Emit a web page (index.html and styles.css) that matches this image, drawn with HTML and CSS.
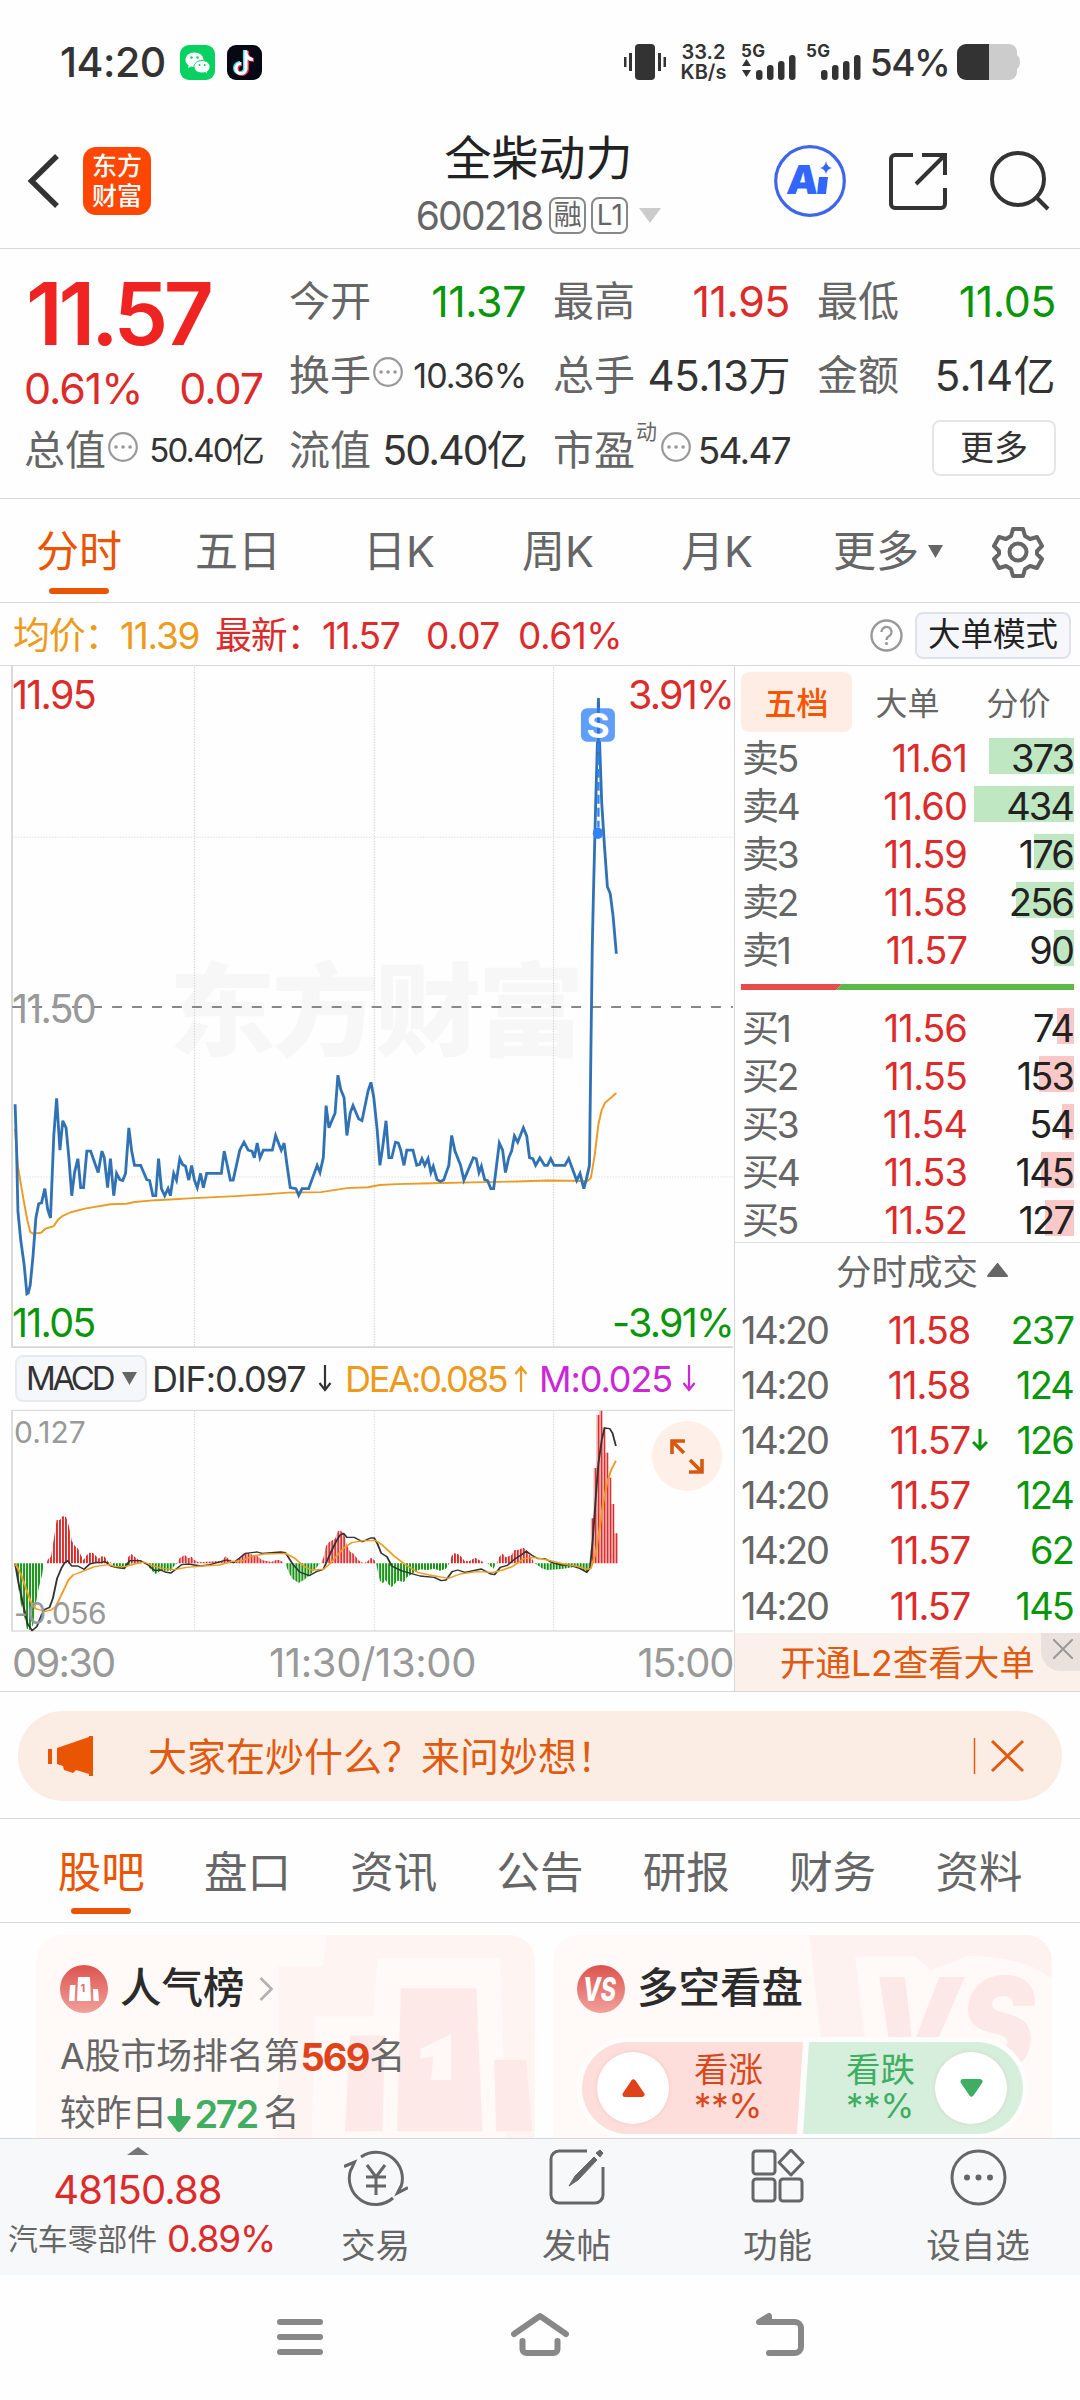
FILE: index.html
```html
<!DOCTYPE html>
<html lang="zh-CN">
<head>
<meta charset="utf-8">
<title>全柴动力 600218</title>
<link rel="stylesheet" href="styles.css">
</head>
<body>
<header class="status">
  <span class="clock">14:20</span>
  <svg class="app" viewBox="0 0 35 35"><rect width="35" height="35" rx="9" fill="#07d160"/><path d="M14.500 7.500c-5.300 0-9 3.200-9 7.200 0 2.300 1.200 4.200 3.200 5.500l-.8 2.700 3.200-1.500c1 .3 2.200.5 3.400.5 5 0 9-3.200 9-7.200s-4-7.200-9-7.200z" fill="#fff"/><path d="M22 15.500c4.500 0 8 2.700 8 6.300 0 2-1 3.600-2.700 4.800l.6 2.300-2.700-1.300c-1 .3-2 .4-3.200.4-4.500 0-8-2.700-8-6.200s3.500-6.300 8-6.300z" fill="#fff" stroke="#07d160"/><g fill="#07d160"><circle cx="11.500" cy="12.500" r="1.200"/><circle cx="17.500" cy="12.500" r="1.200"/><circle cx="19.500" cy="20" r="1"/><circle cx="24.700" cy="20" r="1"/></g></svg>
  <svg class="app" viewBox="0 0 35 35"><rect width="35" height="35" rx="9" fill="#060814"/><g fill="none" stroke-width="4"><path d="M18 5v18a5 5 0 1 1-5-5M18 8c1 4 3 6 7 6" stroke="#25f4ee"/><path d="M20 6v18a5 5 0 1 1-5-5M20 9c1 4 3 6 7 6" stroke="#fe2c55"/><path d="M19 5.500v18a5 5 0 1 1-5-5M19 8.500c1 4 3 6 7 6" stroke="#fff" stroke-width="3.200"/></g></svg>
  <span class="spacer"></span>
  <svg width="42" height="36" viewBox="0 0 42 36" fill="#333"><rect x="11" width="20" height="36" rx="4"/><rect y="13" width="2.500" height="10"/><rect x="5" y="9" width="3" height="18"/><rect x="34" y="9" width="3" height="18"/><rect x="39.500" y="13" width="2.500" height="10"/></svg>
  <span class="speed">33.2<br>KB/s</span>
  <span class="signal"><b>5G</b><svg viewBox="0 0 56 36" fill="#333"><path d="M1 22l4.500-7 4.500 7zM1 26l4.500 7 4.500-7z"/><rect x="15" y="26" width="6.500" height="10" rx="3"/><rect x="26" y="21" width="6.500" height="15" rx="3"/><rect x="37" y="17" width="6.500" height="19" rx="3"/><rect x="48" y="11" width="6.500" height="25" rx="3"/></svg></span>
  <span class="signal second"><b>5G</b><svg viewBox="0 0 56 36" fill="#333"><rect x="15" y="26" width="6.500" height="10" rx="3"/><rect x="26" y="21" width="6.500" height="15" rx="3"/><rect x="37" y="17" width="6.500" height="19" rx="3"/><rect x="48" y="11" width="6.500" height="25" rx="3"/></svg></span>
  <span class="percent">54%</span>
  <svg width="63" height="36" viewBox="0 0 63 36"><path d="M32 0h20a8 8 0 0 1 8 8v3q3 2 3 7t-3 7v3a8 8 0 0 1-8 8H32z" fill="#ccc"/><path d="M32 0H9a9 9 0 0 0-9 9v18a9 9 0 0 0 9 9h23z" fill="#333"/></svg>
</header>

<nav class="titlebar">
  <div class="left">
    <svg width="32" height="54" viewBox="0 0 32 54" fill="none" stroke="#333" stroke-width="5.500"><path d="M30 2L4.500 27 30 52"/></svg>
    <span class="logo">东方<br>财富</span>
  </div>
  <div class="title"><h1>全柴动力</h1><p>600218<i>融</i><i class="l1">L1</i><svg width="22" height="15" viewBox="0 0 22 15"><path d="M0 0h22L11 15z" fill="#ccc"/></svg></p></div>
  <div class="right">
    <svg width="72" height="72" viewBox="0 0 72 72"><circle cx="36" cy="36" r="34.300" fill="#fff" stroke="#3f66ea" stroke-width="3.200"/><text x="13" y="49" font-family="Inter" font-weight="900" font-size="40" fill="#3366ff" transform="skewX(-5) translate(3 0)">A</text><path d="M45 32h9l-2 17h-9z" fill="#3366ff"/><path d="M52 16q1 6 6 7-5 1-6 6-1-5-6-6 5-1 6-7z" fill="#3366ff"/></svg>
    <svg width="58" height="58" viewBox="0 0 58 58" fill="none" stroke="#333" stroke-width="4"><path d="M24 3H6a4 4 0 0 0-4 4v45a4 4 0 0 0 4 4h46a4 4 0 0 0 4-4V36M33 3h23v20M56 3L27 32"/></svg>
    <svg width="60" height="60" viewBox="0 0 60 60" fill="none" stroke="#333" stroke-width="4"><circle cx="28" cy="28" r="26"/><path d="M47 47l11 11"/></svg>
  </div>
</nav>

<section class="quote">
  <div class="now">
    <strong>11.57</strong>
    <p class="chg"><span>0.61%</span><span>0.07</span></p>
    <p class="cap"><label>总值</label><svg class="dots" viewBox="0 0 30 30"><circle cx="15" cy="15" r="13.800"/><path d="M8 15h.1M15 15h.1M22 15h.1"/></svg><span class="s33">50.40亿</span></p>
  </div>
  <div class="grid">
    <p><label>今开</label><span class="down">11.37</span></p>
    <p><label>最高</label><span class="up">11.95</span></p>
    <p><label>最低</label><span class="down">11.05</span></p>
    <p><label>换手</label><svg class="dots" viewBox="0 0 30 30"><circle cx="15" cy="15" r="13.800"/><path d="M8 15h.1M15 15h.1M22 15h.1"/></svg><span class="s34">10.36%</span></p>
    <p><label>总手</label><span class="s42">45.13万</span></p>
    <p><label>金额</label><span class="s42 amt">5.14亿</span></p>
    <p><label>流值</label><span class="s41">50.40亿</span></p>
    <p><label>市盈<sup>动</sup></label><svg class="dots pe" viewBox="0 0 30 30"><circle cx="15" cy="15" r="13.800"/><path d="M8 15h.1M15 15h.1M22 15h.1"/></svg><span class="s37">54.47</span></p>
    <p><button>更多</button></p>
  </div>
</section>

<nav class="periods">
  <span class="on">分时</span><span>五日</span><span>日K</span><span>周K</span><span>月K</span><span class="more">更多<svg width="15" height="13" viewBox="0 0 15 13"><path d="M0 0h15L7.500 13z" fill="#666"/></svg></span>
  <svg class="gear" width="52" height="52" viewBox="0 0 52 52" fill="none" stroke="#666" stroke-width="4" stroke-linejoin="round"><path d="M21 3h10l2 7 5 3 7-2 5 9-5 5v3l5 5-5 9-7-2-5 3-2 7H21l-2-7-5-3-7 2-5-9 5-5v-3l-5-5 5-9 7 2 5-3z"/><circle cx="26" cy="26" r="8.500"/></svg>
</nav>

<section class="info">
  <span class="avg">均价：11.39</span><span class="up last">最新：11.57</span><span class="up v">0.07</span><span class="up r">0.61%</span>
  <span class="spacer"></span>
  <svg width="33" height="33" viewBox="0 0 33 33"><circle cx="16.500" cy="16.500" r="15" fill="none" stroke="#999" stroke-width="2.400"/><path d="M11.500 13a5 5 0 1 1 7 4.500q-2 1-2 3.500" fill="none" stroke="#999" stroke-width="2.400"/><circle cx="16.500" cy="24.500" r="1.600" fill="#999"/></svg>
  <button>大单模式</button>
</section>

<main class="board">
  <section class="charts">
    <div class="price">
      <svg viewBox="0 13.400 1557.400 1527.700" preserveAspectRatio="none">
        <text x="358" y="869" textLength="880" font-family="Noto Sans CJK SC" font-weight="900" font-size="226" fill="#f7f7f7">东方财富</text>
        <g fill="none" stroke="#ccc" stroke-width="2" stroke-dasharray="3 3"><path d="M412 15V1538M793 15V1538M1173 15V1538"/><path d="M26 397H1553M26 1158H1553" stroke="#ddd"/></g>
        <path d="M25.500 13V1539H1553" fill="none" stroke="#d8d8d8" stroke-width="4"/>
        <path d="M26 777H1553" stroke="#888" stroke-width="4.500" stroke-dasharray="21 21.300"/>
        <polyline fill="none" stroke="#eb9c27" stroke-width="4.200" stroke-linejoin="round" points="32,1050 38,1135 50,1210 58,1255 64,1281 70,1285 87,1283 96,1274 114,1268 122,1255 133,1245 150,1237 180,1229 234,1219 268,1218 285,1214 330,1210 370,1208 400,1206 500,1201 560,1197 610,1193 680,1192 735,1183 780,1181 805,1176 840,1174 915,1172 1000,1170 1095,1168 1160,1166 1245,1167 1252,1160 1260,1110 1268,1040 1275,1008 1282,992 1295,980 1306,970"/>
        <polyline fill="none" stroke="#3172b5" stroke-width="6" points="32,995 35,1090 38,1235 44,1300 51,1353 57,1420 60,1418 64,1400 70,1335 76,1250 82,1218 88,1216 95,1184 101,1230 107,1250 114,1065 120,982 127,1098 133,1032 140,1048 146,1115 152,1200 158,1148 165,1117 171,1182 177,1182 184,1100 192,1100 208,1148 216,1100 221,1115 228,1182 234,1117 241,1200 247,1150 254,1164 260,1166 266,1150 273,1048 279,1100 285,1132 298,1132 311,1164 317,1166 324,1200 330,1200 336,1117 342,1184 349,1200 356,1184 361,1200 368,1150 374,1165 381,1117 387,1130 393,1134 400,1165 406,1132 412,1165 418,1182 425,1150 431,1182 438,1150 469,1150 475,1100 482,1134 488,1165 494,1165 501,1132 508,1098 517,1080 526,1098 534,1100 539,1115 545,1082 551,1115 558,1098 577,1098 584,1065 590,1082 596,1098 602,1082 608,1130 615,1182 627,1184 633,1199 640,1184 654,1184 672,1132 678,1148 685,1115 691,998 697,1048 704,1030 710,1015 716,930 722,962 729,980 735,1065 742,1015 748,998 760,1028 767,1032 780,965 786,946 792,980 799,1050 805,1132 811,1090 818,1032 824,1115 830,1115 838,1080 844,1082 849,1098 856,1132 862,1098 875,1098 883,1132 889,1130 894,1117 900,1132 907,1117 913,1148 918,1134 926,1164 933,1168 940,1165 951,1132 957,1065 964,1100 976,1132 983,1165 1003,1115 1009,1117 1015,1148 1020,1134 1027,1164 1033,1166 1040,1184 1046,1184 1058,1082 1065,1098 1071,1148 1078,1115 1084,1100 1090,1066 1097,1080 1109,1048 1116,1066 1122,1115 1129,1117 1135,1132 1144,1115 1154,1132 1160,1132 1167,1117 1174,1132 1197,1132 1205,1117 1222,1166 1229,1150 1237,1184 1242,1165 1249,1132 1252,880 1255,640 1258,500 1262,330 1266,180 1268,85 1271,200 1275,320 1281,420 1287,508 1293,523 1299,573 1306,658"/>
        <path d="M1268 186V375" stroke="#2f83f7" stroke-width="5" stroke-dasharray="20 9"/><ellipse cx="1267" cy="388" rx="11" ry="13" fill="#2f83f7"/>
        <rect x="1231" y="108" width="72" height="75" rx="13" fill="#5f9ffb"/><path d="M1268 108V183" stroke="#2f75de" stroke-width="6"/>
        <text x="1267" y="174" text-anchor="middle" font-family="Inter" font-weight="700" font-size="75" fill="#fff">S</text>
      </svg>
      <div class="axis up"><span>11.95</span><span>3.91%</span></div>
      <div class="axis mid"><span>11.50</span></div>
      <div class="axis down"><span>11.05</span><span>-3.91%</span></div>
    </div>
    <div class="indicator">
      <button>MACD<svg width="15" height="13" viewBox="0 0 15 13"><path d="M0 0h15L7.500 13z" fill="#666"/></svg></button>
      <span class="dif">DIF:0.097</span><svg class="arr" viewBox="0 0 14 27" fill="none" stroke="#333" stroke-width="2.200"><path d="M7 0v25M1.500 18L7 25l5.500-7"/></svg>
      <span class="dea">DEA:0.085</span><svg class="arr" viewBox="0 0 14 27" fill="none" stroke="#ee9a1c" stroke-width="2.200"><path d="M7 27V2M1.500 9L7 2l5.500 7"/></svg>
      <span class="m">M:0.025</span><svg class="arr" viewBox="0 0 14 27" fill="none" stroke="#cd26d6" stroke-width="2.200"><path d="M7 0v25M1.500 18L7 25l5.500-7"/></svg>
    </div>
    <div class="macd">
      <svg viewBox="0 207 1557.400 672" preserveAspectRatio="none">
        <defs>
          <pattern id="red" x="30" width="6.340" height="20" patternUnits="userSpaceOnUse"><rect width="4" height="20" fill="#d92626"/></pattern>
          <pattern id="green" x="30" width="6.340" height="20" patternUnits="userSpaceOnUse"><rect width="4" height="20" fill="#088c08"/></pattern>
        </defs>
        <path d="M412 212V872M793 212V872M1173 212V872" fill="none" stroke="#ccc" stroke-width="2" stroke-dasharray="4 4"/>
        <path d="M1553 211H25.500V873H1553" fill="none" stroke="#ddd" stroke-width="4"/>
        <path fill="url(#red)" d="M98 670 102 657 108 650 114 597 120 540 127 540 133 528 140 531 146 558 152 602 159 619 165 625 171 645 177 660 184 645 190 638 197 639 203 647 209 656 216 649 222 650 229 665 236 668V670zM268 670 272 650 279 642 285 650 292 658 300 665V670zM376 670 380 655 392 645 399 655 406 650 412 660 420 667 440 665 470 662 478 648 485 658 500 665 508 655 516 640 525 638 535 645 545 648 555 660 575 666 585 660 592 660 600 667V670zM680 670 685 655 691 617 697 607 704 601 710 596 716 573 723 573 729 582 735 616 742 635 748 640 754 650 761 662 770 670 778 665 786 653 793 660 797 670zM953 670 957 647 963 640 970 642 976 648 985 664 995 663 1007 653 1015 660 1025 667V670zM1053 670 1058 650 1065 641 1072 652 1084 645 1090 630 1097 630 1109 623 1116 630 1122 645 1130 662V670z"/>
        <path fill="url(#red)" d="M1252 670V535h6V384h6V225h6.500V212h6.300V262h6.300V338h6.300V413h6.300V492h6.300V580h7V670z"/>
        <path fill="url(#green)" d="M35 670 38 735 44 790 51 828 57 866 63 870 70 855 76 790 82 744 89 706 93 670zM236 670 242 684 260 686 270 680 280 670zM310 670 320 690 330 702 340 692 362 692 370 676 376 670zM605 670 608 684 614 703 620 717 633 729 646 718 660 700 672 680 678 670zM797 670 799 684 805 722 811 730 817 720 824 734 830 741 836 732 842 722 849 724 856 726 862 712 875 700 890 688 905 690 920 686 932 692 945 686 952 670zM1033 670 1045 686 1052 670zM1133 670 1150 686 1160 690 1190 687 1220 680 1235 692 1245 698 1250 670z"/>
        <polyline fill="none" stroke="#333" stroke-width="4" stroke-linejoin="round" points="32,670 38,720 50,800 58,850 68,872 78,860 88,825 95,808 105,802 112,775 121,715 130,685 137,668 143,662 152,678 165,678 178,688 190,672 205,667 215,668 222,664 235,678 250,683 263,686 275,662 298,662 315,676 328,692 340,690 350,696 362,699 375,685 385,674 400,672 425,678 445,674 480,660 495,668 520,640 545,636 555,640 595,636 605,638 620,672 635,696 655,707 670,695 685,688 700,640 712,605 720,586 728,580 735,592 750,592 768,605 785,594 793,594 800,612 808,640 820,650 830,678 850,692 870,700 890,708 920,712 935,722 945,720 958,695 970,690 985,697 1020,687 1040,702 1048,704 1060,682 1075,676 1090,658 1105,644 1115,634 1127,646 1140,656 1155,656 1170,668 1190,675 1210,677 1230,686 1243,697 1250,685 1256,600 1262,480 1268,370 1275,300 1281,264 1292,266 1298,280 1305,318"/>
        <polyline fill="none" stroke="#f09d1f" stroke-width="4.200" stroke-linejoin="round" points="32,670 45,705 55,745 65,785 75,806 95,814 108,810 118,800 130,765 145,720 155,705 175,694 200,680 230,674 245,680 265,680 285,672 305,666 325,678 345,685 370,689 395,682 430,678 465,675 490,665 515,661 535,648 560,642 605,640 625,655 645,680 660,690 685,688 700,670 715,645 730,622 745,608 770,602 795,601 810,615 835,648 860,675 885,697 910,705 950,715 975,702 1010,695 1045,697 1065,690 1085,680 1110,656 1130,652 1150,657 1175,665 1200,674 1225,680 1245,688 1252,685 1262,640 1270,570 1278,490 1287,425 1295,390 1305,362"/>
      </svg>
      <span class="hi">0.127</span><span class="lo">-0.056</span>
      <svg class="expand" viewBox="0 0 70 70"><circle cx="35" cy="35" r="35" fill="#fef0e8"/><path d="M20 33V20h13M20 20l12 12M50 38v13H37M50 51L38 39" fill="none" stroke="#d6590f" stroke-width="3.600"/></svg>
    </div>
    <div class="times"><span>09:30</span><span>11:30/13:00</span><span>15:00</span></div>
  </section>

  <aside class="depth">
    <div class="dtabs"><span class="on">五档</span><span>大单</span><span>分价</span></div>
    <div class="levels sell">
      <p><label>卖5</label><b>11.61</b><em><i style="width:85px"></i>373</em></p>
      <p><label>卖4</label><b>11.60</b><em><i style="width:100px"></i>434</em></p>
      <p><label>卖3</label><b>11.59</b><em><i style="width:40px"></i>176</em></p>
      <p><label>卖2</label><b>11.58</b><em><i style="width:58px"></i>256</em></p>
      <p><label>卖1</label><b>11.57</b><em><i style="width:20px"></i>90</em></p>
    </div>
    <svg class="ratio" viewBox="0 0 333 6"><path d="M0 0H101L95 6H0z" fill="#e94b4b"/><path d="M101 0H333V6H95z" fill="#5cb947"/></svg>
    <div class="levels buy">
      <p><label>买1</label><b>11.56</b><em><i style="width:17px"></i>74</em></p>
      <p><label>买2</label><b>11.55</b><em><i style="width:35px"></i>153</em></p>
      <p><label>买3</label><b>11.54</b><em><i style="width:12px"></i>54</em></p>
      <p><label>买4</label><b>11.53</b><em><i style="width:33px"></i>145</em></p>
      <p><label>买5</label><b>11.52</b><em><i style="width:29px"></i>127</em></p>
    </div>
    <h2>分时成交<svg width="21" height="14" viewBox="0 0 21 14"><path d="M10.500 1L20 13H1z" fill="#666" stroke="#666" stroke-width="2" stroke-linejoin="round"/></svg></h2>
    <div class="trades">
      <p><label>14:20</label><b>11.58</b><em>237</em></p>
      <p><label>14:20</label><b>11.58</b><em>124</em></p>
      <p><label>14:20</label><b>11.57</b><svg width="16" height="22" viewBox="0 0 16 22" fill="none" stroke="#0a960a" stroke-width="3"><path d="M8 0v20M1 13l7 7 7-7"/></svg><em>126</em></p>
      <p><label>14:20</label><b>11.57</b><em>124</em></p>
      <p><label>14:20</label><b>11.57</b><em>62</em></p>
      <p><label>14:20</label><b>11.57</b><em>145</em></p>
    </div>
    <div class="l2">开通L2查看大单<span><svg width="20" height="20" viewBox="0 0 20 20" stroke="#999" stroke-width="2"><path d="M0 0l20 20M20 0L0 20"/></svg></span></div>
  </aside>
</main>

<section class="promo"><div>
  <svg width="45" height="40" viewBox="0 0 45 40" fill="#ea5504"><path d="M0 13h4v15H0zM9 12L41 1V0h4v40h-4v-2l-13-4-3 3-9-3-1-4-6-2z"/></svg>
  <span>大家在炒什么？来问妙想！</span>
  <svg class="close" width="52" height="36" viewBox="0 0 52 36" fill="none" stroke="#e05a10"><path d="M1.500 0v36" stroke-width="1.500"/><path d="M19 3l31 30M50 3L19 33" stroke-width="3"/></svg>
</div></section>

<nav class="tabs"><span class="on">股吧</span><span>盘口</span><span>资讯</span><span>公告</span><span>研报</span><span>财务</span><span>资料</span></nav>

<section class="cards">
  <article>
    <svg class="bg" viewBox="18 30 1497 610">
      <path d="M890 30H1515V640H1430L1412 100H1043L1030 275H855L845 640H745V124H880z" fill="#fdf0ee" opacity=".55"/>
      <path d="M1113 190H1340L1358 620H1102zM960 332H1065L1058 620H945zM1393 405H1490L1508 620H1400z" fill="#fce6e4" opacity=".8"/>
      <path d="M1264 328L1172 372V402L1210 394 1204 466H1264z" fill="#fff8f6"/>
    </svg>
    <h3><svg width="48" height="48" viewBox="0 0 48 48"><defs><linearGradient id="g" x2="0" y2="1"><stop stop-color="#dc534e"/><stop offset="1" stop-color="#f2a09b"/></linearGradient></defs><circle cx="24" cy="24" r="24" fill="url(#g)"/><path d="M18 12h12l1 24H17zM10 20h5.500l-1 16H9zM33 24h5l1 12h-5.500z" fill="#fff"/><text x="20.500" y="27" font-family="Inter" font-weight="700" font-size="11" fill="#e0736e">1</text></svg><span>人气榜</span><svg width="14" height="24" viewBox="0 0 14 24" fill="none" stroke="#b5b1b0" stroke-width="2.800"><path d="M1.500 1l11 11-11 11"/></svg></h3>
    <p>A股市场排名第<b>569</b>名</p>
    <p class="second">较昨日<svg width="24" height="34" viewBox="0 0 24 34" fill="#3fae62"><path d="M9 3q0-3 3-3t3 3v15h7q3 1 1 3L14 33q-2 2-4 0L1 21q-2-2 1-3h7z"/></svg><b class="g">272</b><span>名</span></p>
  </article>
  <article>
    <svg class="bg" viewBox="24 30 1497 610">
      <path d="M793 30H1521V160Q1440 95 1270 92L1160 135 1110 94H930L960 340H828z" fill="#fdeeec" opacity=".65"/>
      <text x="970" y="440" font-family="Inter" font-weight="900" font-style="italic" font-size="390" fill="#fce8e6" textLength="500" lengthAdjust="spacingAndGlyphs">VS</text>
    </svg>
    <h3><svg width="48" height="48" viewBox="0 0 48 48"><circle cx="24" cy="24" r="24" fill="url(#g)"/><text x="6" y="36" font-family="Inter" font-weight="800" font-style="italic" font-size="32" textLength="33" lengthAdjust="spacingAndGlyphs" fill="#fff">VS</text></svg><span>多空看盘</span></h3>
    <div class="vote">
      <div class="bull"><i><svg width="23" height="18" viewBox="0 0 23 18"><path d="M11.500 3L20 15.500H3z" fill="#e0421a" stroke="#e0421a" stroke-width="5" stroke-linejoin="round"/></svg></i><span>看涨<br>**%</span></div>
      <div class="bear"><span>看跌<br>**%</span><i><svg width="23" height="18" viewBox="0 0 23 18"><path d="M11.500 15L20 2.500H3z" fill="#3fae62" stroke="#3fae62" stroke-width="5" stroke-linejoin="round"/></svg></i></div>
    </div>
  </article>
</section>

<footer class="actions">
  <div class="index"><svg width="22" height="8" viewBox="0 0 22 8"><path d="M11 0l11 8H0z" fill="#777"/></svg><b>48150.88</b><p>汽车零部件<em>0.89%</em></p></div>
  <div><svg width="64" height="58" viewBox="0 0 64 58" fill="none" stroke="#666" stroke-width="3"><path d="M17 8A26.300 26.300 0 0 1 57 38M49 49A26.300 26.300 0 0 1 7 20M0 17.500L10.500 13 7 21M64 38.500L53.500 44 57 37"/><path d="M23 16l9 12 9-12M22 28h20M22 37h20M32 28v18"/></svg><span>交易</span></div>
  <div><svg width="56" height="56" viewBox="0 0 56 56" fill="none" stroke="#666" stroke-width="3"><path d="M38 2H10a8 8 0 0 0-8 8v36a8 8 0 0 0 8 8h36a8 8 0 0 0 8-8V18"/><path d="M20 37l6-10 19-19 3 3-19 20zM47 4l4-3 3 3-3 4z" fill="#666" stroke-width="1"/></svg><span>发帖</span></div>
  <div><svg width="54" height="54" viewBox="0 0 54 54" fill="none" stroke="#666" stroke-width="3"><rect x="2" y="2" width="22" height="23" rx="3"/><rect x="2" y="30" width="22" height="22" rx="3"/><rect x="29" y="30" width="22" height="22" rx="3"/><path d="M40 1l12 12.500L40 26 28 13.500z" stroke-linejoin="round"/></svg><span>功能</span></div>
  <div><svg width="57" height="57" viewBox="0 0 57 57"><circle cx="28.500" cy="28.500" r="26.500" fill="none" stroke="#666" stroke-width="3"/><g fill="#666"><circle cx="17" cy="28.500" r="3"/><circle cx="28.500" cy="28.500" r="3"/><circle cx="40" cy="28.500" r="3"/></g></svg><span>设自选</span></div>
</footer>

<nav class="system">
  <svg width="46" height="44" viewBox="0 0 46 44" fill="none" stroke="#888" stroke-width="6" stroke-linecap="round"><path d="M3 10h40M3 25h40M3 40h40"/></svg>
  <svg width="58" height="44" viewBox="0 0 58 44" fill="none" stroke="#888" stroke-width="6" stroke-linecap="round"><path d="M3 22L29 4l26 18" stroke-linejoin="round"/><path d="M11.500 29v8a4 4 0 0 0 4 4h27a4 4 0 0 0 4-4v-8"/></svg>
  <svg width="48" height="44" viewBox="0 0 48 44" fill="none" stroke="#888" stroke-width="6" stroke-linecap="round"><path d="M13 41h26a6 6 0 0 0 6-6V16a6 6 0 0 0-6-6H3L13 4v6" stroke-linejoin="round"/></svg>
</nav>
</body>
</html>
```

FILE: styles.css
```css
* { box-sizing: border-box; margin: 0; padding: 0; }
body { width: 1080px; height: 2400px; overflow: hidden; background: #fefefe; color: #333; font-family: Inter, "Noto Sans CJK SC", sans-serif; font-weight: 400; letter-spacing: -.03em; line-height: 1; }
svg { display: block; flex: none; }
i, em { font-style: normal; }
b { font-weight: 400; }
button { font: inherit; color: inherit; letter-spacing: 0; border-radius: 8px; }
.spacer { flex: 1; }
.up { color: #dc2b2b; }
.down { color: #0a960a; }

.status { height: 124px; display: flex; align-items: center; padding: 0 60px 0 60px; }
.clock { width: 120px; font-size: 41px; font-weight: 500; }
.app { width: 35px; height: 35px; margin-right: 12px; }
.speed { width: 75px; text-align: center; font-size: 20px; line-height: 20px; font-weight: 600; letter-spacing: 0; }
.signal { position: relative; width: 56px; height: 36px; }
.signal svg { width: 56px; height: 36px; }
.signal b { position: absolute; left: 0; top: -1px; font-size: 17px; font-weight: 700; letter-spacing: .02em; }
.signal.second { margin-left: 9px; }
.percent { width: 95px; text-align: center; font-size: 37px; font-weight: 500; letter-spacing: -.04em; }

.titlebar { height: 125px; border-bottom: 1px solid #d8d8d8; display: grid; grid-template-columns: 1fr auto 1fr; align-items: center; padding: 0 30px 12px 27px; }
.titlebar .left, .titlebar .right { display: flex; align-items: center; }
.titlebar .right { justify-content: flex-end; gap: 43px; }
.logo { width: 68px; height: 68px; margin-left: 24px; border-radius: 13px; background: #ff4602; color: #fff; font-size: 25px; font-weight: 500; line-height: 30px; padding-top: 4px; text-align: center; letter-spacing: 0; }
.title { text-align: center; padding-top: 8px; }
.title h1 { font-size: 47px; line-height: 52px; font-weight: 400; letter-spacing: 0; color: #222; }
.title p { display: flex; align-items: center; height: 46px; margin-top: 8px; font-size: 39px; letter-spacing: -.045em; color: #666; }
.title i { width: 37px; height: 37px; margin-left: 5px; border: 2px solid #888; border-radius: 8px; font-size: 28px; line-height: 32px; letter-spacing: 0; text-align: center; }
.title p i:first-of-type { margin-left: 7px; }
.title p svg { margin-left: 11px; }

.quote { height: 250px; border-bottom: 1px solid #d8d8d8; display: flex; padding: 0 24px 0 24px; }
.quote label { font-size: 41px; color: #666; letter-spacing: 0; position: relative; }
.now { width: 239px; padding-top: 33px; margin-right: 26px; }
.now strong { display: block; margin-left: 2px; font-size: 87px; line-height: 64px; font-weight: 600; letter-spacing: -.05em; color: #f02323; }
.chg { display: flex; justify-content: space-between; margin-top: 20px; font-size: 43px; line-height: 44px; letter-spacing: -.025em; color: #dc2b2b; }
.cap { display: flex; align-items: center; justify-content: space-between; height: 40px; margin-top: 20px; }
.dots { width: 30px; height: 30px; margin: -7px auto 0 2px; fill: none; stroke: #999; stroke-width: 2.200; stroke-linecap: round; }
.dots path { stroke-width: 3.500; }
.dots.pe { margin-left: 26px; }
.grid { display: grid; grid-template-columns: 237px 237px 239px; column-gap: 27px; grid-auto-rows: 74.500px; padding-top: 15px; }
.grid p { display: flex; align-items: center; justify-content: space-between; font-size: 43px; }
.grid sup { position: absolute; left: 83px; top: -9px; font-size: 21px; line-height: 21px; }
.grid .s42 { font-size: 42px; letter-spacing: -.01em; }
.grid .amt { letter-spacing: .01em; }
.grid .s41 { font-size: 41px; letter-spacing: -.045em; }
.grid .s37 { font-size: 37px; letter-spacing: -.045em; }
.grid .s34 { font-size: 34px; letter-spacing: -.03em; }
.s33 { font-size: 33px; letter-spacing: -.055em; }
.grid button { margin-left: auto; width: 124px; height: 56px; border: 2px solid #e6e6e6; background: #fff; font-size: 34px; position: relative; top: -2px; }

.periods { position: relative; height: 104px; border-bottom: 1px solid #d8d8d8; display: grid; grid-template-columns: 158px 160px 162px 156px 162px 176px 106px; align-items: center; font-size: 43px; letter-spacing: 0; color: #666; }
.periods span { position: relative; text-align: center; line-height: 105px; }
.periods .more { display: flex; align-items: center; padding-left: 35px; }
.periods .more svg { margin-left: 9px; }
.gear { margin-left: 18px; }
.on { color: #ea5504; }
.periods .on::after, .tabs .on::after { content: ""; position: absolute; left: 50%; bottom: 10px; width: 60px; height: 6px; margin-left: -30px; border-radius: 3px; background: #ea5504; }

.info { height: 63px; border-bottom: 1px solid #d8d8d8; display: flex; align-items: center; padding: 2px 9px 0 13px; font-size: 37px; }
.avg { width: 202px; color: #ee9a1c; white-space: nowrap; letter-spacing: -.035em; }
.last { width: 211px; white-space: nowrap; letter-spacing: -.035em; }
.v { width: 92px; }
.info button { margin-left: 12px; width: 156px; height: 47px; border: 2px solid #dfe2e8; background: #f6f7fa; font-size: 32.500px; color: #222; white-space: nowrap; }

.board { display: flex; height: 1026px; border-bottom: 1px solid #d8d8d8; }
.charts { width: 734px; }
.price { position: relative; height: 682px; display: flex; flex-direction: column; justify-content: space-between; padding: 9px 1px 4px 12px; }
.price > svg, .macd > svg:first-child { position: absolute; left: 0; top: 0; width: 735px; height: 100%; }
.axis { position: relative; display: flex; justify-content: space-between; font-size: 39.500px; line-height: 41px; letter-spacing: -.045em; font-feature-settings: "calt" 0; }
.mid { color: #999; }
.indicator { height: 61px; display: flex; align-items: center; padding: 0 0 0 15px; font-size: 36px; letter-spacing: -.03em; }
.indicator button { display: flex; align-items: center; justify-content: space-between; width: 132px; height: 47px; padding: 0 8px 0 9px; border: 2px solid #e8eaee; background: #f6f7fa; font-size: 33px; letter-spacing: -.1em; }
.indicator span { white-space: nowrap; }
.dif { width: 166px; margin-left: 5px; letter-spacing: -.03em; }
.dea { width: 169px; margin-left: 13px; color: #ee9a1c; letter-spacing: -.06em; }
.m { width: 143px; margin-left: 11px; color: #cd26d6; }
.arr { width: 14px; height: 27px; }
.macd { position: relative; height: 224px; display: flex; flex-direction: column; justify-content: space-between; padding: 8px 0 5px 14px; font-size: 30px; line-height: 30px; color: #999; font-feature-settings: "calt" 0; }
.hi, .lo { position: relative; letter-spacing: 0; }
.lo { letter-spacing: -.02em; }
.expand { position: absolute; left: 652px; top: 12px; width: 70px; height: 70px; }
.times { height: 58px; display: grid; grid-template-columns: 1fr auto 1fr; align-items: center; padding: 1px 1px 0 12px; font-size: 40px; color: #999; }
.times span:nth-child(1) { letter-spacing: -.045em; }
.times span:nth-child(2) { letter-spacing: -.01em; }
.times span:last-child { text-align: right; letter-spacing: -.035em; }

.depth { width: 346px; border-left: 1px solid #d8d8d8; }
.dtabs { display: flex; align-items: center; height: 60px; margin: 6px 0 0 6px; font-size: 32px; letter-spacing: 0; color: #666; }
.dtabs span { width: 111px; line-height: 64px; height: 60px; text-align: center; }
.dtabs .on { background: #fdede5; border-radius: 8px; color: #f95400; font-weight: 500; }
.levels p, .trades p { position: relative; display: flex; align-items: center; height: 48px; padding: 0 6px 0 7px; font-size: 38px; }
.levels label, .levels b { position: relative; top: 2px; }
.levels label { width: 91px; font-size: 37px; letter-spacing: -.06em; color: #666; }
.levels b { width: 134px; text-align: right; color: #dc2b2b; letter-spacing: -.025em; }
.levels em { position: relative; flex: 1; height: 36px; line-height: 41px; text-align: right; color: #222; letter-spacing: -.05em; z-index: 0; padding-right: 1px; }
.levels em i { position: absolute; right: 0; top: 0; height: 36px; background: #bfe7c1; z-index: -1; }
.buy em i { background: #fbc8c8; }
.ratio { width: 333px; height: 6px; margin: 12px 6px; }
.depth h2 { display: flex; align-items: center; height: 60px; padding-left: 101px; border-top: 1px solid #e0e0e0; font-size: 35.500px; font-weight: 400; letter-spacing: 0; color: #666; }
.depth h2 svg { margin-left: 9px; margin-top: -6px; }
.trades p { height: 55.200px; }
.trades label { width: 91px; margin-left: -1px; letter-spacing: -.06em; color: #666; }
.trades b { width: 138px; text-align: right; color: #dc2b2b; letter-spacing: -.03em; }
.trades svg { margin-left: 2px; }
.trades em { flex: 1; text-align: right; color: #0a960a; letter-spacing: -.05em; padding-right: 1px; }
.l2 { position: relative; height: 58px; padding-left: 45px; background: #fcf0ea; color: #e05a10; font-size: 35.500px; line-height: 62px; letter-spacing: 0; white-space: nowrap; }
.l2 span { position: absolute; right: 0; top: 0; width: 39px; height: 38px; padding: 6px 0 0 12px; border-radius: 0 0 0 20px; background: #ebe1dc; }

.promo { height: 127px; border-bottom: 1px solid #d8d8d8; padding: 19px 18px 0; }
.promo div { display: flex; align-items: center; height: 90px; padding: 0 37px 0 30px; border-radius: 45px; background: #fcede4; color: #e05a10; font-size: 39px; letter-spacing: 0; }
.promo span { margin-left: 55px; }
.promo .close { margin-left: auto; }

.tabs { height: 104px; border-bottom: 1px solid #d8d8d8; display: grid; grid-template-columns: repeat(7, 146.300px); padding-left: 28px; font-size: 43.500px; letter-spacing: 0; color: #666; }
.tabs span { position: relative; text-align: center; line-height: 107px; height: 103px; }
.tabs .on::after { bottom: 8px; }

.cards { height: 215px; padding: 12px 28px 0 36px; display: flex; gap: 18px; overflow: hidden; }
.cards article { position: relative; width: 499px; height: 230px; padding: 26px 0 0 24px; border-radius: 26px; background: #fff9f7; overflow: hidden; flex: none; letter-spacing: 0; }
.cards .bg { position: absolute; left: 0; top: 0; width: 499px; height: 203px; }
.cards h3 { position: relative; display: flex; align-items: center; height: 56px; font-size: 41.500px; font-weight: 500; color: #2b2b2b; }
.cards h3 span { margin: 0 14px 0 12px; }
.cards p { position: relative; display: flex; align-items: center; height: 57px; margin-top: 11px; font-size: 35.800px; color: #666; white-space: nowrap; }
.cards p.second { margin-top: 0; }
.cards p b { font-size: 38px; font-weight: 700; letter-spacing: -.05em; color: #e0421a; margin: 0 1px; }
.cards p .g { color: #3fae62; margin: 0 7px 0 3px; font-weight: 600; letter-spacing: -.06em; }
.cards p.second svg { margin-top: 3px; }
.vote { position: relative; display: flex; width: 451px; height: 102px; margin: 20px 0 0 0; border: 5px solid #fffdfc; border-radius: 51px; overflow: hidden; background: #fffdfc; line-height: 36px; font-size: 34.500px; }
.vote div { display: flex; align-items: center; height: 92px; }
.vote i { display: flex; align-items: center; justify-content: center; width: 72px; height: 72px; border-radius: 50%; background: #fff; box-shadow: 0 0 4px rgba(200, 80, 60, .15); }
.bull { width: 221px; padding-left: 15px; background: #fddedb; color: #d8481c; clip-path: polygon(0 0, 100% 0, 215px 100%, 0 100%); }
.bull span { margin-left: 25px; }
.bear { width: 220px; padding-left: 43px; background: #d6efdc; color: #3fae62; clip-path: polygon(6px 0, 100% 0, 100% 100%, 0 100%); }
.bear i { margin-left: 20px; }

.actions { position: relative; height: 137px; border-top: 1px solid #d3d6dc; background: #f7f8fa; display: grid; grid-template-columns: 275px 201px 201px 201px 200px; letter-spacing: 0; color: #666; }
.actions div { display: flex; flex-direction: column; align-items: center; justify-content: space-between; padding: 10px 0 11px; font-size: 34.500px; line-height: 36px; }
.actions svg { height: auto; }
.actions .index { padding: 8px 0 18px; }
.index b { font-size: 40px; line-height: 40px; letter-spacing: -.022em; color: #dc2b2b; margin-top: 4px; }
.index p { display: flex; align-items: center; font-size: 29.800px; white-space: nowrap; padding-left: 8px; }
.index em { margin-left: 10px; font-size: 37px; letter-spacing: -.035em; color: #dc2b2b; }

.system { height: 125px; display: flex; justify-content: space-between; padding: 37px 276px 0 277px; }
```
